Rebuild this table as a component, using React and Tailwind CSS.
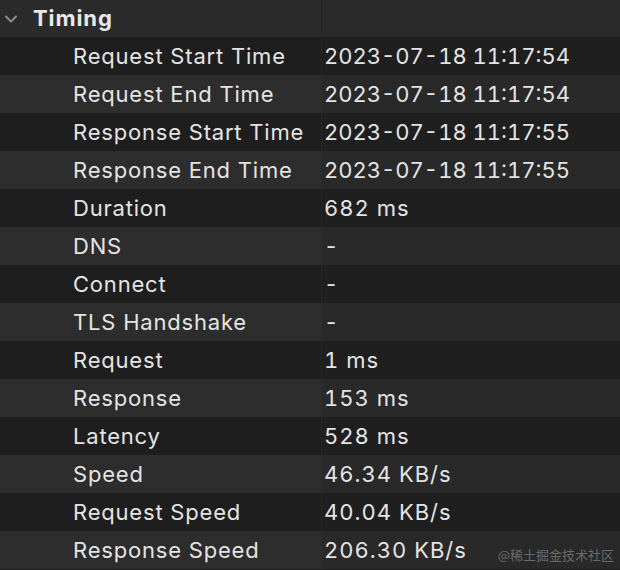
import React from "react";

const rows = [
  ["Request Start Time", "2023-07-18 11:17:54"],
  ["Request End Time", "2023-07-18 11:17:54"],
  ["Response Start Time", "2023-07-18 11:17:55"],
  ["Response End Time", "2023-07-18 11:17:55"],
  ["Duration", "682 ms"],
  ["DNS", "-"],
  ["Connect", "-"],
  ["TLS Handshake", "-"],
  ["Request", "1 ms"],
  ["Response", "153 ms"],
  ["Latency", "528 ms"],
  ["Speed", "46.34 KB/s"],
  ["Request Speed", "40.04 KB/s"],
  ["Response Speed", "206.30 KB/s"],
];

export default function App() {
  return (
    <div
      className="w-[620px] h-[570px] overflow-hidden bg-[#1e1e1e] text-[#e4e4e4] relative"
      style={{ fontFamily: "Inter, 'Noto Sans', sans-serif" }}
    >
      {/* header */}
      <div className="flex h-[37px] bg-[#2b2b2b]">
        <div className="w-[322px] flex items-center border-r border-[#232323]">
          <svg width="14" height="10" viewBox="0 0 14 10" className="ml-[4px] mr-[15px]">
            <path d="M2 2.5 L7 7.5 L12 2.5" fill="none" stroke="#8c8c8c" strokeWidth="2" strokeLinecap="round" strokeLinejoin="round" />
          </svg>
          <span className="text-[22px] font-bold tracking-[0.9px] text-[#e8e8e8]">Timing</span>
        </div>
        <div className="flex-1 bg-[#2a2a2a]" />
      </div>

      {/* rows */}
      {rows.map(([k, v], i) => {
        const light = i % 2 === 1;
        const isDate = v.includes(":");
        return (
          <div key={k} className={`flex h-[38px] items-center ${light ? "bg-[#2d2d2d]" : "bg-[#1e1e1e]"}`}>
            <div className={`w-[322px] h-full flex items-center pl-[73px] text-[22px] tracking-[0.8px] border-r ${light ? "border-[#2d2d2d]" : "border-[#262626]"}`}>
              {k}
            </div>
            <div className={`flex-1 h-full flex items-center pl-[2px] text-[22px] tabular-nums ${isDate ? "tracking-[0px]" : "tracking-[1px]"} ${light ? "bg-[#292929]" : "bg-[#1f1f1f]"}`}>
              {v}
            </div>
          </div>
        );
      })}

      <div
        className="absolute right-[6px] bottom-[6px] text-[13px] text-[#6a6a6a]"
        style={{ fontFamily: "'Noto Sans CJK SC', sans-serif" }}
      >
        @稀土掘金技术社区
      </div>
    </div>
  );
}
